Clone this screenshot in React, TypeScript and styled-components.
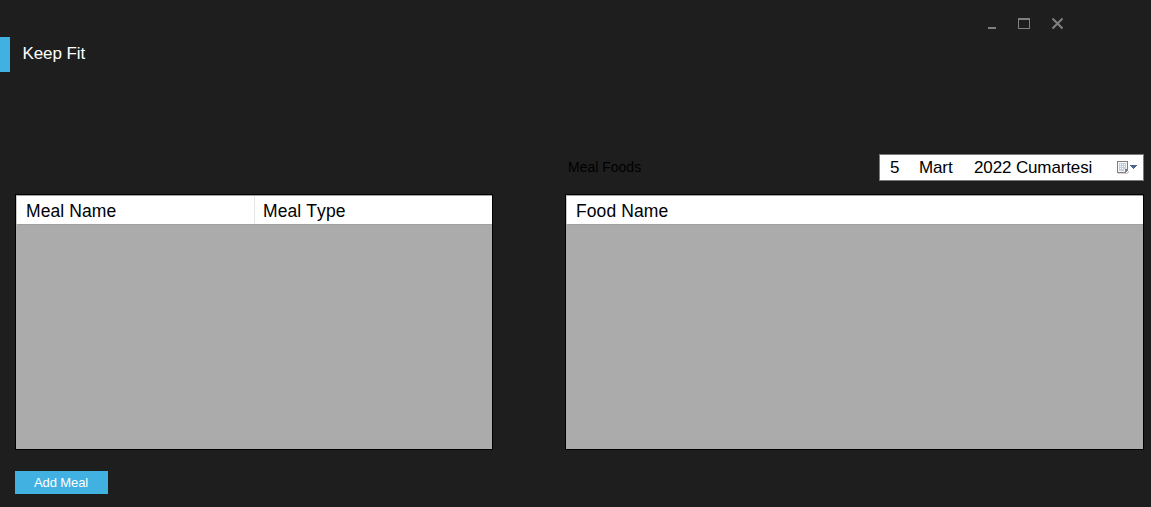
import React from "react";
import styled, { createGlobalStyle } from "styled-components";

const GlobalStyle = createGlobalStyle`
  body { margin: 0; background: #1e1e1e; }
  * { box-sizing: border-box; }
`;

const Window = styled.main`
  width: 1151px;
  height: 507px;
  background: #1e1e1e;
  font-family: "Liberation Sans", Arial, sans-serif;
  font-kerning: none;
  color: #000;
  overflow: hidden;
`;

const TitleBar = styled.header`
  height: 154px;
  display: flex;
  justify-content: space-between;
  align-items: flex-start;
`;

const Brand = styled.div`
  display: flex;
  align-items: center;
  height: 35px;
  margin-top: 37px;
  border-left: 10px solid #41b1e1;
  padding: 0 0 2px 12.5px;
`;

const Title = styled.h1`
  margin: 0;
  font-size: 17px;
  font-weight: 400;
  line-height: 19px;
  letter-spacing: -0.1px;
  color: #fff;
`;

const WindowControls = styled.nav`
  display: flex;
  gap: 21px;
  margin: 18px 88px 0 0;
`;

const ControlButton = styled.button`
  width: 12px;
  height: 12px;
  padding: 0;
  border: 0;
  background: none;
  display: block;
`;

const Panels = styled.div`
  display: grid;
  grid-template-columns: 478px 579px;
  column-gap: 72px;
  padding-left: 15px;
`;

const Panel = styled.section`
  display: flex;
  flex-direction: column;
`;

const PanelTop = styled.div`
  height: 40px;
  display: flex;
  justify-content: space-between;
  align-items: flex-start;
`;

const PanelLabel = styled.label`
  font-size: 14px;
  line-height: 16px;
  padding: 5px 0 0 3px;
`;

const DatePicker = styled.div`
  width: 265px;
  height: 27px;
  display: flex;
  align-items: center;
  background: #fff;
  border: 1px solid #7a7a7a;
  padding: 0 5px 0 10px;
  font-size: 17px;
  line-height: 20px;
`;

const DatePart = styled.span<{ $width: number }>`
  flex: 0 0 ${(p) => p.$width}px;
  letter-spacing: -0.13px;
  white-space: pre;
`;

const CalendarIcon = styled.svg`
  display: block;
  flex: none;
  margin-left: auto;
`;

const Grid = styled.div`
  height: 256px;
  border: 1px solid #000;
  background: #ababab;
`;

const GridHeader = styled.div`
  display: flex;
  height: 30px;
  background: #fff;
  border-top: 1px solid #a0a0a0;
  border-left: 1px solid #c8c8c8;
  border-bottom: 1px solid #a0a0a0;
`;

const GridColumn = styled.div<{ $width?: number }>`
  flex: ${(p) => (p.$width ? `0 0 ${p.$width}px` : "1")};
  padding: 5px 0 0 9px;
  font-size: 17.5px;
  line-height: 20px;
  letter-spacing: 0.1px;
  white-space: nowrap;

  & + & {
    border-left: 1px solid #e5e5e5;
    padding-left: 8px;
  }
`;

const AddButton = styled.button`
  display: block;
  width: 93px;
  height: 23px;
  margin: 21px 0 0 15px;
  padding: 0 1px 0 0;
  border: 0;
  background: #41b1e1;
  color: #fff;
  font: 13px/23px "Liberation Sans", Arial, sans-serif;
  letter-spacing: -0.1px;
`;

export default function App() {
  return (
    <>
      <GlobalStyle />
      <Window>
        <TitleBar>
          <Brand>
            <Title>Keep Fit</Title>
          </Brand>
          <WindowControls>
            <ControlButton aria-label="Minimize">
              <svg width="12" height="12" shapeRendering="crispEdges" display="block">
                <path d="M3 9h8v2H3z" fill="#808080" />
              </svg>
            </ControlButton>
            <ControlButton aria-label="Maximize">
              <svg width="12" height="12" shapeRendering="crispEdges" display="block">
                <path d="M0 0h12v11H0z M1 2v8h10V2z" fill="#808080" fillRule="evenodd" />
              </svg>
            </ControlButton>
            <ControlButton aria-label="Close">
              <svg width="12" height="12" display="block">
                <path d="M1.5 .5l10 10M11.5 .5l-10 10" stroke="#808080" strokeWidth="2" />
              </svg>
            </ControlButton>
          </WindowControls>
        </TitleBar>
        <Panels>
          <Panel>
            <PanelTop />
            <Grid>
              <GridHeader>
                <GridColumn $width={237}>Meal Name</GridColumn>
                <GridColumn>Meal Type</GridColumn>
              </GridHeader>
            </Grid>
          </Panel>
          <Panel>
            <PanelTop>
              <PanelLabel>Meal Foods</PanelLabel>
              <DatePicker>
                <DatePart $width={29}>5</DatePart>
                <DatePart $width={55}>Mart</DatePart>
                <DatePart $width={120}>2022 Cumartesi</DatePart>
                <CalendarIcon width="21" height="14" shapeRendering="crispEdges">
                  <path d="M1 12h8l3-3v2l-2 2H1z" fill="#d4d4d4" />
                  <path d="M0 0h11v9l-3 3H0z" fill="#857d7b" />
                  <path d="M1 1h9v7H8v3H1z" fill="#f4f6f8" />
                  <path d="M2 2h7v6H7v2H2z" fill="#c3cfdb" />
                  <path d="M3 3h1v1H3zM5 3h1v1H5zM7 3h1v1H7zM3 5h1v1H3zM5 5h1v1H5zM7 5h1v1H7zM3 7h1v1H3zM5 7h1v1H5z" fill="#fff" />
                  <path d="M13 4h7v1h-1v1h-1v1h-1v1h-1V7h-1V6h-1V5h-1z" fill="#48658d" />
                </CalendarIcon>
              </DatePicker>
            </PanelTop>
            <Grid>
              <GridHeader>
                <GridColumn>Food Name</GridColumn>
              </GridHeader>
            </Grid>
          </Panel>
        </Panels>
        <AddButton>Add Meal</AddButton>
      </Window>
    </>
  );
}
